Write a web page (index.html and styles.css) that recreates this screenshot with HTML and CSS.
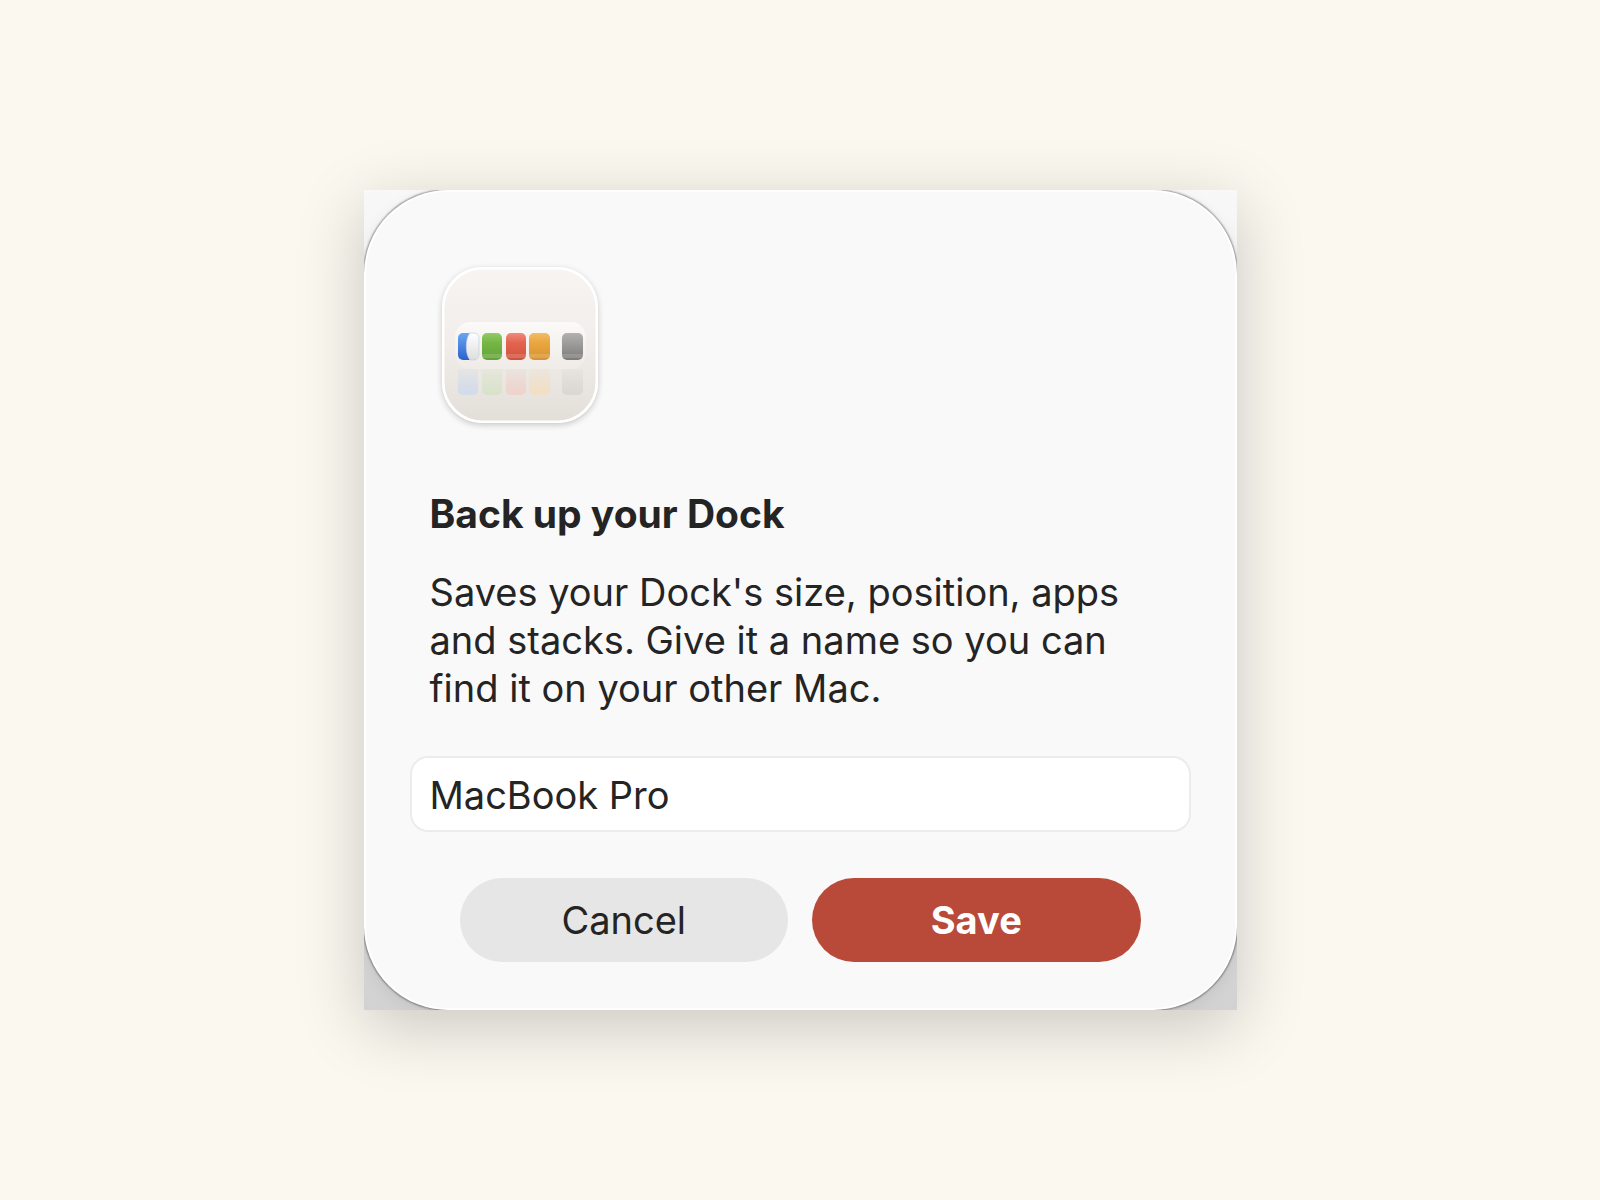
FILE: index.html
```
<!DOCTYPE html>
<html lang="en">
<head>
    <meta charset="UTF-8">
    <meta name="viewport" content="width=device-width, initial-scale=1.0">
    <title>Back up your Dock</title>
    <link rel="stylesheet" href="styles.css">
</head>
<body>
    <main class="backdrop">
        <form class="dialog">
            <svg class="app-icon" viewBox="0 0 156 156" aria-hidden="true">
                <defs>
                    <linearGradient id="plate" x1="0" y1="0" x2="0" y2="1">
                        <stop offset="0" stop-color="#f7f4f1"/>
                        <stop offset="0.5" stop-color="#f0edea"/>
                        <stop offset="1" stop-color="#e3ded8"/>
                    </linearGradient>
                    <linearGradient id="shelf" x1="0" y1="0" x2="0" y2="1">
                        <stop offset="0" stop-color="#fbfaf8"/>
                        <stop offset="1" stop-color="#efebe7"/>
                    </linearGradient>
                    <linearGradient id="blue" x1="0" y1="0" x2="0" y2="1">
                        <stop offset="0" stop-color="#6aa5f2"/>
                        <stop offset="1" stop-color="#2a62cc"/>
                    </linearGradient>
                    <linearGradient id="white" x1="0" y1="0" x2="0" y2="1">
                        <stop offset="0" stop-color="#ffffff"/>
                        <stop offset="1" stop-color="#dedede"/>
                    </linearGradient>
                    <linearGradient id="green" x1="0" y1="0" x2="0" y2="1">
                        <stop offset="0" stop-color="#93cb68"/>
                        <stop offset="0.35" stop-color="#75b644"/>
                        <stop offset="1" stop-color="#64a33c"/>
                    </linearGradient>
                    <linearGradient id="red" x1="0" y1="0" x2="0" y2="1">
                        <stop offset="0" stop-color="#ee8b7c"/>
                        <stop offset="0.35" stop-color="#e4654f"/>
                        <stop offset="1" stop-color="#cf523e"/>
                    </linearGradient>
                    <linearGradient id="orange" x1="0" y1="0" x2="0" y2="1">
                        <stop offset="0" stop-color="#f0bd66"/>
                        <stop offset="0.35" stop-color="#eaa740"/>
                        <stop offset="1" stop-color="#d69233"/>
                    </linearGradient>
                    <linearGradient id="gray" x1="0" y1="0" x2="0" y2="1">
                        <stop offset="0" stop-color="#b3b1b0"/>
                        <stop offset="1" stop-color="#7d7b7a"/>
                    </linearGradient>
                    <linearGradient id="fade" x1="0" y1="0" x2="0" y2="1">
                        <stop offset="0" stop-color="#fff" stop-opacity="0.2"/>
                        <stop offset="1" stop-color="#fff" stop-opacity="1"/>
                    </linearGradient>
                    <mask id="reflection">
                        <rect x="0" y="102" width="156" height="26" fill="url(#fade)"/>
                    </mask>
                </defs>

                <rect x="1" y="1" width="154" height="154" rx="40" fill="url(#plate)" stroke="#fff" stroke-width="3"/>
                <rect x="13" y="55" width="131" height="47" rx="15" fill="url(#shelf)"/>

                <!-- dock tiles -->
                <rect x="16" y="66" width="20" height="27" rx="5" fill="url(#blue)"/>
                <path d="M28 66h4a5 5 0 0 1 5 5v17a5 5 0 0 1-5 5h-4c-5-5-5-22 0-27z" fill="url(#white)" stroke="#b9cbe6" stroke-width="0.6"/>
                <rect x="40" y="66" width="20" height="27" rx="5" fill="url(#green)"/>
                <rect x="64" y="66" width="20" height="27" rx="5" fill="url(#red)"/>
                <rect x="87" y="66" width="21" height="27" rx="5" fill="url(#orange)"/>
                <rect x="120" y="66" width="21" height="27" rx="5" fill="url(#gray)"/>
                <path d="M40 89h20M64 89h20M87 89h21M120 89h21" stroke="#fff" stroke-opacity="0.15" stroke-width="4"/>

                <!-- reflections on the shelf -->
                <g mask="url(#reflection)">
                    <rect x="16" y="100" width="20" height="28" rx="5" fill="#d0dbec"/>
                    <rect x="40" y="100" width="20" height="28" rx="5" fill="#d7e2c8"/>
                    <rect x="64" y="100" width="20" height="28" rx="5" fill="#eed2cb"/>
                    <rect x="87" y="100" width="21" height="28" rx="5" fill="#f1dfc2"/>
                    <rect x="120" y="100" width="21" height="28" rx="5" fill="#dad6d2"/>
                </g>
            </svg>

            <h1 class="title">Back up your Dock</h1>
            <label class="message" for="backup-name">Saves your Dock's size, position, apps and stacks. Give it a name so you can find it on your other Mac.</label>
            <input class="name-field" id="backup-name" type="text" value="MacBook Pro">

            <div class="actions">
                <button class="button" type="button">Cancel</button>
                <button class="button primary" type="submit">Save</button>
            </div>
        </form>
    </main>
</body>
</html>
```

FILE: styles.css
```
*, *:before, *:after {
    box-sizing: border-box;
}

body {
    margin: 0;
    min-height: 100vh;
    display: flex;
    justify-content: center;
    align-items: center;
    background-color: #fbf8f0;
    color: #242424;
    font-family: Inter, 'Liberation Sans', sans-serif;
    font-size: 38px;
    line-height: 48px;
}

/* square behind the dialog, visible in its corners */
.backdrop {
    width: 100%;
    max-width: 873px;
    overflow: hidden;
    background: linear-gradient(#f8f8f9, #e2e2e2 50%, #d2d2d2);
    box-shadow: 0 16px 64px rgba(0, 0, 0, 0.2);
}

.dialog {
    display: flex;
    flex-direction: column;
    padding: 75px 44px 46px;
    border: 2px solid #fff;
    border-radius: 84px;
    background-color: #f9f9f9;
    box-shadow: 0 0 2px 1px rgba(0, 0, 0, 0.4), 0 4px 16px rgba(0, 0, 0, 0.08);
}

.app-icon {
    width: 156px;
    height: 156px;
    margin-left: 32px;
    border-radius: 40px;
    box-shadow: 0 2px 6px rgba(0, 0, 0, 0.2);
}

.title {
    margin: 67px 20px 30px;
    font-size: 39px;
    font-weight: 700;
}

.message {
    margin: 0 20px 44px;
}

.name-field {
    width: 100%;
    height: 76px;
    padding: 2px 18px 0;
    border: 2px solid #ececec;
    border-radius: 18px;
    background-color: #fff;
    color: inherit;
    font: inherit;
    outline: none;
}

.actions {
    display: flex;
    gap: 24px;
    margin: 46px 50px 0;
}

.button {
    flex: 1;
    height: 84px;
    border: none;
    border-radius: 42px;
    background-color: #e6e6e6;
    color: inherit;
    font: inherit;
    cursor: pointer;
}

.primary {
    background-color: #b94a39;
    color: #fff;
    font-weight: 700;
}

@media (max-width: 720px) {
    .dialog {
        padding: 40px 20px;
    }
    .actions {
        margin: 40px 0 0;
    }
}
```
